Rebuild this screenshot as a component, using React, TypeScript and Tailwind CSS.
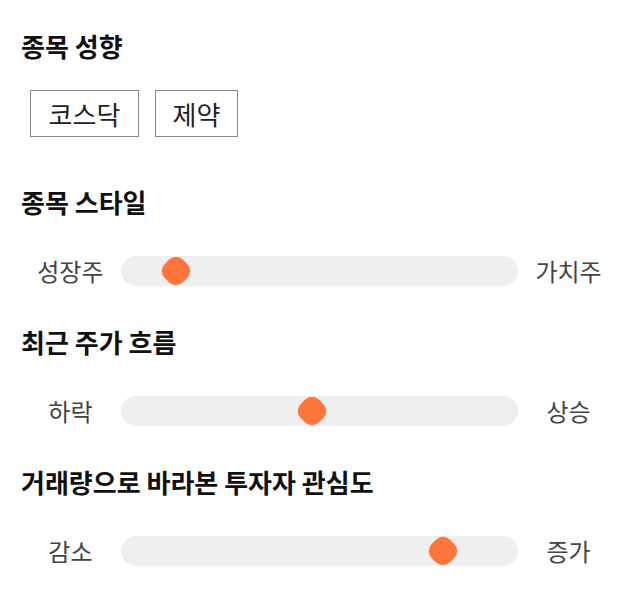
const font = "font-['Noto_Sans_CJK_KR','Noto_Sans',sans-serif]"

const sliders = [
  { title: "종목 스타일", left: "성장주", right: "가치주", thumb: "left-[40px]", gap: "mt-[49px]" },
  { title: "최근 주가 흐름", left: "하락", right: "상승", thumb: "left-[176px]", gap: "mt-[40px]" },
  { title: "거래량으로 바라본 투자자 관심도", left: "감소", right: "증가", thumb: "left-[307px]", gap: "mt-[40px]" },
]

function Heading({ children, className = "" }: { children: string; className?: string }) {
  return (
    <h2 className={`h-[32px] text-[26px] leading-[32px] font-bold text-[#111] ${className}`}>
      {children}
    </h2>
  )
}

function Slider({ left, right, thumb }: { left: string; right: string; thumb: string }) {
  return (
    <div className="mt-[38px] flex h-[30px] items-center">
      <span className="w-[101px] text-center text-[24px] leading-[30px] text-[#444]">{left}</span>
      <div className="relative h-[30px] w-[398px] rounded-full bg-[#efefef]">
        <div
          className={`absolute top-[2px] ${thumb} ml-[2px] h-[26px] w-[26px] rotate-45 rounded-[10px] bg-[#ff763d]`}
        />
      </div>
      <span className="w-[101px] text-center text-[24px] leading-[30px] text-[#444]">{right}</span>
    </div>
  )
}

export default function App() {
  return (
    <div className={`min-h-[606px] w-[640px] bg-white px-[21px] pt-[30px] ${font}`}>
      <Heading>종목 성향</Heading>
      <div className="mt-[28px] flex gap-[16px] pl-[9px]">
        <button className="h-[47px] w-[109px] border border-[#888] text-[26px] leading-[45px] text-[#222]">코스닥</button>
        <button className="h-[47px] w-[83px] border border-[#888] text-[26px] leading-[45px] text-[#222]">제약</button>
      </div>
      {sliders.map((s) => (
        <div key={s.title}>
          <Heading className={s.gap}>{s.title}</Heading>
          <div className="-ml-[1px]">
            <Slider left={s.left} right={s.right} thumb={s.thumb} />
          </div>
        </div>
      ))}
    </div>
  )
}
